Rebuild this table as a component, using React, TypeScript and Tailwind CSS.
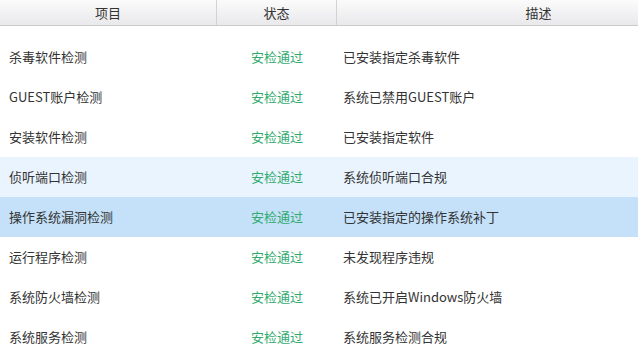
import React from 'react';

type Row = { name: string; desc: string; tone?: 'hover' | 'active' };

const rows: Row[] = [
  { name: '杀毒软件检测', desc: '已安装指定杀毒软件' },
  { name: 'GUEST账户检测', desc: '系统已禁用GUEST账户' },
  { name: '安装软件检测', desc: '已安装指定软件' },
  { name: '侦听端口检测', desc: '系统侦听端口合规', tone: 'hover' },
  { name: '操作系统漏洞检测', desc: '已安装指定的操作系统补丁', tone: 'active' },
  { name: '运行程序检测', desc: '未发现程序违规' },
  { name: '系统防火墙检测', desc: '系统已开启Windows防火墙' },
  { name: '系统服务检测', desc: '系统服务检测合规' },
];

export default function App() {
  return (
    <div
      className="w-[638px] h-[350px] overflow-hidden bg-white text-[13px] text-[#333]"
      style={{ fontFamily: '"Noto Sans CJK SC", "Noto Sans", sans-serif' }}
    >
      <div className="w-[740px]">
        {/* 表头 */}
        <div className="flex h-[26px] border-b border-[#cacaca] bg-gradient-to-b from-[#fbfbfb] to-[#e9e9ec] text-[#333]">
          <div className="w-[217px] flex items-center justify-center border-r border-[#d2d2d2]">项目</div>
          <div className="w-[120px] flex items-center justify-center border-r border-[#d2d2d2]">状态</div>
          <div className="flex-1 flex items-center justify-center">描述</div>
        </div>

        {/* 列表 */}
        <div className="pt-[11px]">
          {rows.map((r) => (
            <div
              key={r.name}
              className={
                'flex h-[40px] items-center ' +
                (r.tone === 'hover'
                  ? 'bg-[#e9f4fe]'
                  : r.tone === 'active'
                  ? 'bg-[#c4e1f9]'
                  : 'bg-white')
              }
            >
              <div className="w-[217px] pl-[9px]">{r.name}</div>
              <div className="w-[120px] text-center text-[#32ab6e]">安检通过</div>
              <div className="flex-1 pl-[6px]">{r.desc}</div>
            </div>
          ))}
        </div>
      </div>
    </div>
  );
}
